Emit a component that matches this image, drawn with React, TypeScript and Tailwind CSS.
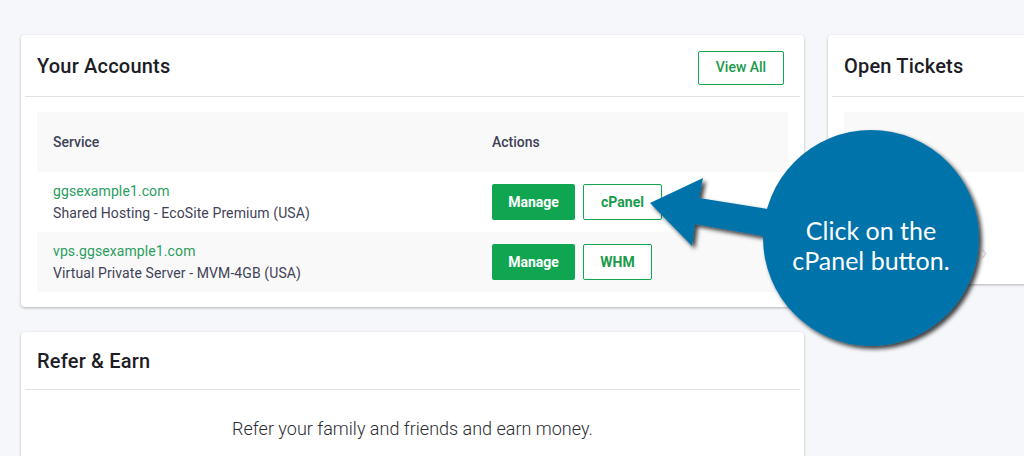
import React from "react";

const font = { fontFamily: "Roboto, 'Liberation Sans', sans-serif" };

function Card({ className, children }: { className?: string; children: React.ReactNode }) {
  return (
    <div className={`bg-white rounded-[4px] shadow-[0_1px_3px_rgba(0,0,0,0.28)] ${className ?? ""}`}>
      {children}
    </div>
  );
}

export default function App() {
  return (
    <div
      className="relative w-[1024px] h-[456px] overflow-hidden bg-[#f6f7fb]"
      style={font}
    >
      <div className="flex gap-[24px] pl-[21px] pt-[35px]">
        {/* Left column */}
        <div className="flex flex-col gap-[25px] w-[783px] shrink-0">
          <Card className="h-[272px]">
            <div className="mx-1 h-[62px] border-b border-[#e2e2e2] flex items-center justify-between pl-3 pr-4">
              <h2 className="text-[20px] font-medium tracking-[0.2px] text-[#1d1d26]">Your Accounts</h2>
              <button className="w-[86px] h-[34px] border border-[#12a64f] rounded-[2px] text-[14px] font-medium text-[#1b9a4c] mt-[4px]">
                View All
              </button>
            </div>
            <div className="mx-4 mt-[15px]">
              <div className="grid grid-cols-[439px_1fr] h-[60px] items-center bg-[#f9f9f9] text-[14px] font-medium text-[#3f4257]">
                <div className="pl-4">Service</div>
                <div className="pl-4">Actions</div>
              </div>
              <div className="grid grid-cols-[439px_1fr] h-[60px] items-center bg-white">
                <div className="pl-4 text-[14px] leading-[22px] tracking-[0.1px]">
                  <div className="text-[#2a9d60]">ggsexample1.com</div>
                  <div className="text-[#3f4257]">Shared Hosting - EcoSite Premium (USA)</div>
                </div>
                <div className="pl-4 flex gap-2">
                  <button className="w-[83px] h-[36px] rounded-[2px] bg-[#10a651] text-white text-[14px] font-bold">
                    Manage
                  </button>
                  <button className="w-[79px] h-[36px] rounded-[2px] border border-[#12a64f] bg-white text-[#1b9a4c] text-[14px] font-bold">
                    cPanel
                  </button>
                </div>
              </div>
              <div className="grid grid-cols-[439px_1fr] h-[60px] items-center bg-[#f9f9f9]">
                <div className="pl-4 text-[14px] leading-[22px] tracking-[0.1px]">
                  <div className="text-[#2a9d60]">vps.ggsexample1.com</div>
                  <div className="text-[#3f4257]">Virtual Private Server - MVM-4GB (USA)</div>
                </div>
                <div className="pl-4 flex gap-2">
                  <button className="w-[83px] h-[36px] rounded-[2px] bg-[#10a651] text-white text-[14px] font-bold">
                    Manage
                  </button>
                  <button className="w-[69px] h-[36px] rounded-[2px] border border-[#12a64f] bg-white text-[#1b9a4c] text-[14px] font-bold">
                    WHM
                  </button>
                </div>
              </div>
            </div>
          </Card>

          <Card className="h-[200px]">
            <div className="mx-1 h-[58px] border-b border-[#e2e2e2] flex items-center pl-3">
              <h2 className="text-[20px] font-medium tracking-[0.2px] text-[#1d1d26]">Refer &amp; Earn</h2>
            </div>
            <p className="mt-[25px] text-center text-[18px] font-light text-[#2c2c34]">
              Refer your family and friends and earn money.
            </p>
          </Card>
        </div>

        {/* Right column */}
        <div className="w-[260px] shrink-0">
          <Card className="h-[249px] relative">
            <div className="ml-1 h-[62px] border-b border-[#e2e2e2] flex items-center pl-3">
              <h2 className="text-[20px] font-medium tracking-[0.2px] text-[#1d1d26]">Open Tickets</h2>
            </div>
            <div className="ml-4 mt-[15px] h-[60px] bg-[#f9f9f9]" />
            <span className="absolute left-[153px] top-[201px] text-[22px] font-light text-[#d4d4d4]">›</span>
          </Card>
        </div>
      </div>

      {/* Callout overlay */}
      <svg
        className="absolute inset-0 pointer-events-none"
        width="1024"
        height="456"
        viewBox="0 0 1024 456"
      >
        <defs>
          <filter id="sh" x="-20%" y="-20%" width="150%" height="150%">
            <feDropShadow dx="3" dy="3" stdDeviation="2" floodColor="#000" floodOpacity="0.75" />
          </filter>
        </defs>
        <g filter="url(#sh)" fill="#0273aa">
          <polygon points="650,203 703,178 699,198 780,211 780,239 695,224 692,246" />
          <circle cx="871" cy="238" r="108" />
        </g>
      </svg>
      <div
        className="absolute left-[763px] top-[130px] w-[216px] h-[216px] flex flex-col items-center justify-center pt-[13px] text-white text-[25px] leading-[30px]"
        style={{ fontFamily: "Lato, 'Open Sans', sans-serif" }}
      >
        <div>Click on the</div>
        <div>cPanel button.</div>
      </div>
    </div>
  );
}
